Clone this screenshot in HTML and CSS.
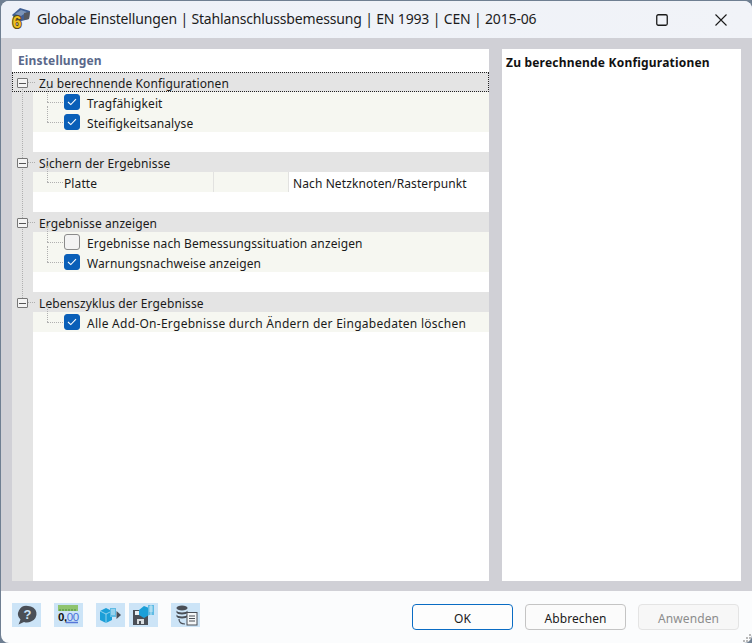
FILE: index.html
```html
<!DOCTYPE html>
<html lang="de">
<head>
<meta charset="utf-8">
<title>Globale Einstellungen</title>
<link rel="stylesheet" href="styles.css">
</head>
<body>
<div class="window">
  <header class="titlebar">
    <svg class="app-icon" width="22" height="24" viewBox="0 0 22 24">
      <path d="M3 7 L11 0 L21 3 L20 11 L9 14 Z" fill="#3f5f94"/>
      <path d="M6 6 L12 2 L18 4 L12 8 Z" fill="#7d95b8"/>
      <path d="M15 5 L21 4 L20 11 L15 12 Z" fill="#55585f"/>
      <text x="3.500" y="19.500" class="six">6</text>
    </svg>
    <span class="title">Globale Einstellungen | Stahlanschlussbemessung | EN 1993 | CEN | 2015-06</span>
    <div class="winctl">
      <svg width="12" height="12" viewBox="0 0 12 12"><rect x="0.75" y="0.75" width="10.5" height="10.5" rx="1.5" fill="none" stroke="#1a1a1a" stroke-width="1.3"/></svg>
      <svg width="12" height="12" viewBox="0 0 12 12"><path d="M0.5 0.5 L11.5 11.5 M11.5 0.5 L0.5 11.500" stroke="#1a1a1a" stroke-width="1.1"/></svg>
    </div>
  </header>

  <main class="content">
    <section class="panel tree">
      <h2 class="panel-head">Einstellungen</h2>
      <div class="rows">
        <div class="row section focus"><span class="exp"></span><span>Zu berechnende Konfigurationen</span></div>
        <div class="row child"><span class="cb on"><svg width="10" height="8" viewBox="0 0 10 8"><path d="M1 4 L3.8 6.6 L9 1.2" fill="none" stroke="#fff" stroke-width="1.1"/></svg></span><span>Tragfähigkeit</span></div>
        <div class="row child"><span class="cb on"><svg width="10" height="8" viewBox="0 0 10 8"><path d="M1 4 L3.8 6.6 L9 1.2" fill="none" stroke="#fff" stroke-width="1.1"/></svg></span><span>Steifigkeitsanalyse</span></div>
        <div class="row blank"></div>

        <div class="row section"><span class="exp"></span><span>Sichern der Ergebnisse</span></div>
        <div class="row child plain">
          <span class="c1">Platte</span><span class="c2"></span><span class="c3">Nach Netzknoten/Rasterpunkt</span>
        </div>
        <div class="row blank"></div>

        <div class="row section"><span class="exp"></span><span>Ergebnisse anzeigen</span></div>
        <div class="row child"><span class="cb"></span><span>Ergebnisse nach Bemessungssituation anzeigen</span></div>
        <div class="row child"><span class="cb on"><svg width="10" height="8" viewBox="0 0 10 8"><path d="M1 4 L3.8 6.6 L9 1.2" fill="none" stroke="#fff" stroke-width="1.1"/></svg></span><span>Warnungsnachweise anzeigen</span></div>
        <div class="row blank"></div>

        <div class="row section"><span class="exp"></span><span>Lebenszyklus der Ergebnisse</span></div>
        <div class="row child"><span class="cb on"><svg width="10" height="8" viewBox="0 0 10 8"><path d="M1 4 L3.8 6.6 L9 1.2" fill="none" stroke="#fff" stroke-width="1.1"/></svg></span><span class="wide">Alle Add-On-Ergebnisse durch Ändern der Eingabedaten löschen</span></div>
      </div>
      <div class="vline"></div>
    </section>
    <section class="panel info">
      <h3 class="info-head">Zu berechnende Konfigurationen</h3>
    </section>
  </main>

  <footer class="footer">
    <div class="tools">
      <span class="tool"><svg width="29" height="24" viewBox="0 0 29 24"><path d="M16 3 a8.500 8 0 0 1 3 15.500 a9 9 0 0 1 -7 .5 L6.500 21.500 L8.500 16.500 a8.500 8 0 0 1 7.500 -13.500Z" fill="#4a4f57"/><text x="15.500" y="16" class="q">?</text></svg></span>
      <span class="tool"><svg width="29" height="24" viewBox="0 0 29 24"><rect x="4" y="2" width="20" height="6" fill="#8fc46f"/><path d="M6 6V8M9 6V8M12 6V8M15 6V8M18 6V8M21 6V8" stroke="#4d8a3a" stroke-width="1"/><text x="4" y="17.500" class="num">0,<tspan class="num-blue">00</tspan></text><path d="M12 19.500 H24" stroke="#5577d8" stroke-width="1.500"/></svg></span>
      <span class="tool-pair">
        <span class="tool"><svg width="29" height="24" viewBox="0 0 29 24"><path d="M4 8 L10 5 L16 8 L16 17 L10 20 L4 17Z" fill="#1b9fd8"/><path d="M4 8 L10 11 L16 8 M10 11 V20" stroke="#bfe6f7" stroke-width=".7" fill="none"/><rect x="14" y="5" width="6" height="9" fill="#5fbbe4"/><path d="M15 7H19M15 9H19M15 11H19" stroke="#fff" stroke-width=".7"/><path d="M20.500 8 L25 12 L20.500 16Z" fill="#4a4f57"/></svg></span>
        <span class="tool"><svg width="29" height="24" viewBox="0 0 29 24"><path d="M4 7 H17 L19 9 V22 H4Z" fill="#4a4f57"/><rect x="6" y="8" width="5" height="4" fill="#e8eef2"/><rect x="8" y="16" width="7" height="5" fill="#d8dde0"/><rect x="10" y="18" width="2" height="3" fill="#4a4f57"/><path d="M10 7 L15 3 L20 5 L20 12 L15 15 L10 12Z" fill="#1b9fd8"/><rect x="19" y="2" width="6" height="10" fill="#5fbbe4"/><path d="M20 4H24M20 6H24M20 8H24M22 2V12" stroke="#fff" stroke-width=".6"/></svg></span>
      </span>
      <span class="tool"><svg width="29" height="24" viewBox="0 0 29 24"><ellipse cx="11" cy="5" rx="5.500" ry="2.500" fill="#4a4f57"/><path d="M5.500 7.500 C6 10 16 10 16.500 7.500 V9.500 C16 12 6 12 5.500 9.500Z" fill="#4a4f57"/><path d="M5.500 11.500 C6 14 16 14 16.500 11.500 V13.500 C16 16 6 16 5.500 13.500Z" fill="#4a4f57"/><path d="M8 16 C8 20 11 21 14 21" fill="none" stroke="#4a4f57" stroke-width="1.200"/><rect x="16" y="9.500" width="10" height="12.500" fill="#f4f6f7" stroke="#4a4f57"/><path d="M18 13H24M18 15.500H24M18 18H24" stroke="#4a4f57"/></svg></span>
    </div>
    <div class="buttons">
      <button class="btn primary">OK</button>
      <button class="btn">Abbrechen</button>
      <button class="btn disabled">Anwenden</button>
    </div>
    <svg class="grip" width="10" height="10" viewBox="0 0 10 10"><path d="M7 1h2v2H7zM4 4h2v2H4zM7 4h2v2H7zM1 7h2v2H1zM4 7h2v2H4zM7 7h2v2H7z" fill="#b9b9b9"/></svg>
  </footer>
</div>
</body>
</html>
```
FILE: styles.css
```css
* { box-sizing: border-box; }
html, body { margin: 0; height: 100%; }
body {
  background: #6f7f92;
  font-family: "Noto Sans", "Open Sans", sans-serif;
  font-size: 12px;
  letter-spacing: 0.1px;
  color: #1a1a1a;
  overflow: hidden;
}
.window {
  position: relative;
  width: 751px;
  height: 642px;
  margin-left: 1px;
  margin-top: 1px;
  border-radius: 8px;
  overflow: hidden;
  display: flex;
  flex-direction: column;
  background: #fbfcfd;
}
.titlebar {
  height: 37px;
  flex: none;
  display: flex;
  align-items: center;
  padding-left: 8px;
  background: linear-gradient(90deg, #edf1f8, #f1f3f8);
}
.app-icon { flex: none; }
.six { font: bold 16px "Liberation Sans", sans-serif; fill: #f0c020; stroke: #5a4a18; stroke-width: 2px; paint-order: stroke; }
.title { margin-left: 6px; margin-bottom: 2px; font-size: 14px; letter-spacing: -0.16px; color: #1c1c1c; white-space: nowrap; }
.winctl {
  margin-left: auto;
  display: flex;
  align-items: center;
  gap: 47px;
  padding-right: 25px;
}
.content {
  flex: none;
  height: 553px;
  background: #d0d0d6;
  padding: 11px 10px 10px 11px;
  display: flex;
  gap: 13px;
}
.panel { background: #fff; height: 532px; }
.tree {
  width: 477px;
  position: relative;
  background: linear-gradient(90deg, #e4e4e4 21px, #fff 21px);
}
.panel-head {
  height: 23px;
  margin: 0;
  padding: 3px 0 0 6px;
  font-size: 12px;
  font-weight: 700;
  letter-spacing: 0.15px;
  line-height: 17px;
  color: #5a688a;
  background: #fff;
}
.vline {
  position: absolute;
  left: 10px;
  top: 40px;
  height: 209px;
  border-left: 1px dotted #b0b0b0;
}
.rows { display: flex; flex-direction: column; position: relative; }
.row { height: 20px; display: flex; align-items: flex-start; line-height: 24px; white-space: nowrap; position: relative; }
.blank { background: #fff; margin-left: 21px; }
.section { background: #e4e4e4; padding-left: 27px; }
.section.focus { outline: 1px dotted #222; outline-offset: -1px; }
.exp {
  position: absolute;
  left: 5px;
  top: 6px;
  width: 11px;
  height: 10px;
  border: 1px solid #777;
  border-radius: 1px;
  background: linear-gradient(#555, #555) center / 7px 1px no-repeat, #f4f4f4;
  z-index: 1;
}
.exp::after {
  content: "";
  position: absolute;
  left: 10px;
  top: 3px;
  width: 7px;
  border-top: 1px dotted #b0b0b0;
}
.child { background: #f6f7f1; margin-left: 21px; padding-left: 31px; }
.child::before {
  content: "";
  position: absolute;
  left: 14px;
  top: 10px;
  width: 16px;
  border-top: 1px dotted #b0b0b0;
}
.child::after {
  content: "";
  position: absolute;
  left: 14px;
  top: -6px;
  height: 16px;
  border-left: 1px dotted #b0b0b0;
}
.cb {
  flex: none;
  width: 16px;
  height: 16px;
  margin: 2px 7px 0 0;
  border-radius: 3px;
  border: 1px solid #8a8a8a;
  background: #f3f3f3;
  display: flex;
  align-items: center;
  justify-content: center;
}
.cb.on { background: #0a5fb8; border-color: #0a5fb8; }
.wide { letter-spacing: 0.27px; }
.plain { background: linear-gradient(90deg, #f6f7f1 256px, #fff 256px); }
.c1 { width: 150px; height: 20px; border-right: 1px solid #e2e2e0; flex: none; }
.c2 { width: 75px; height: 20px; border-right: 1px solid #e2e2e0; flex: none; }
.c3 { padding-left: 4px; }
.info { width: 239px; }
.info-head { margin: 0; padding: 5px 0 0 4px; font-size: 12px; font-weight: 700; letter-spacing: 0.2px; line-height: 17px; color: #111; }
.footer {
  flex: 1;
  display: flex;
  align-items: flex-start;
  padding: 12px 13px 0 11px;
  position: relative;
}
.tools { display: flex; gap: 13px; align-items: center; }
.tool-pair { display: flex; gap: 4px; }
.tool { width: 29px; height: 24px; background: #cce4f7; display: block; }
.tool svg { display: block; }
.q { font: bold 13px "Liberation Sans", sans-serif; fill: #cce4f7; text-anchor: middle; }
.num { font: bold 11.5px "Liberation Sans", sans-serif; letter-spacing: -0.4px; fill: #111; }
.num-blue { fill: #4a6fd8; font-weight: 400; }
.buttons { margin-left: auto; display: flex; gap: 12px; margin-top: 1px; }
.btn {
  width: 101px;
  height: 26px;
  border: 1px solid #c4c4c4;
  border-radius: 4px;
  background: #fbfbfb;
  font: 12px "Noto Sans", "Open Sans", sans-serif;
  letter-spacing: 0.1px;
  color: #1a1a1a;
  padding: 2px 0 0;
}
.btn.primary { border-color: #0a6cc4; background: #fdfdfd; }
.btn.disabled { color: #8c8c8c; border-color: #e4e4e4; background: #f7f7f7; }
.grip { position: absolute; right: 0; bottom: 0; }
```
